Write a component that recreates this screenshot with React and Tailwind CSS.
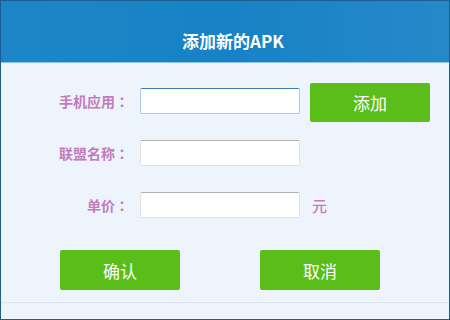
import React from "react";

const font = { fontFamily: '"Noto Sans CJK SC", "Noto Sans", sans-serif' };

function Input({ focused }) {
  return (
    <div
      className={
        "w-[160px] h-[26px] bg-white rounded-[2px] border " +
        (focused
          ? "border-[#a9cbe8] border-t-[#3f7cb4]"
          : "border-[#e0e3e6] border-t-[#b3b3b3]")
      }
    />
  );
}

function Label({ children }) {
  return (
    <div className="w-[128px] text-right text-[14px] font-bold text-[#c27bbb] leading-[26px]">
      {children}
      <span
        className="inline-block w-[14px] text-center"
        style={{ fontFamily: '"Noto Sans CJK TC", sans-serif' }}
      >
        ：
      </span>
    </div>
  );
}

function GreenButton({ children, h = "h-[40px]" }) {
  return (
    <div className={"w-[120px] rounded-[2px] bg-[#5bbd19] flex items-center justify-center text-white text-[17px] leading-none " + h}>
      {children}
    </div>
  );
}

export default function App() {
  return (
    <div style={font} className="w-[450px] h-[320px] flex flex-col bg-[#edf4fb] border-l border-r border-b border-[#1b5e8f] overflow-hidden">
      <div className="h-[63px] shrink-0 flex items-end justify-center pb-[13px] pl-[16px] bg-gradient-to-r from-[#1d86c8] via-[#1682c5] to-[#2589c9] border-t border-t-[#1b5e8f] border-b border-b-[#8cc2e6]">
        <span className="text-white font-bold text-[17px] leading-none">添加新的APK</span>
      </div>
      <div className="flex flex-col pt-[20px]">
        <div className="flex items-start h-[39px]">
          <div className="flex items-center mt-[5px]">
            <Label>手机应用</Label>
            <div className="ml-[11px]">
              <Input focused />
            </div>
          </div>
          <div className="ml-[10px]">
            <GreenButton h="h-[39px]">添加</GreenButton>
          </div>
        </div>
        <div className="flex items-center mt-[18px]">
          <Label>联盟名称</Label>
          <div className="ml-[11px]">
            <Input />
          </div>
        </div>
        <div className="flex items-center mt-[26px]">
          <Label>单价</Label>
          <div className="ml-[11px]">
            <Input />
          </div>
          <span className="ml-[12px] text-[15px] font-medium text-[#c27bbb] leading-none">元</span>
        </div>
        <div className="flex mt-[32px] pl-[59px] gap-[80px]">
          <GreenButton>确认</GreenButton>
          <GreenButton>取消</GreenButton>
        </div>
        <div className="mt-[12px] h-px bg-[#dfe5ea]" />
      </div>
    </div>
  );
}
